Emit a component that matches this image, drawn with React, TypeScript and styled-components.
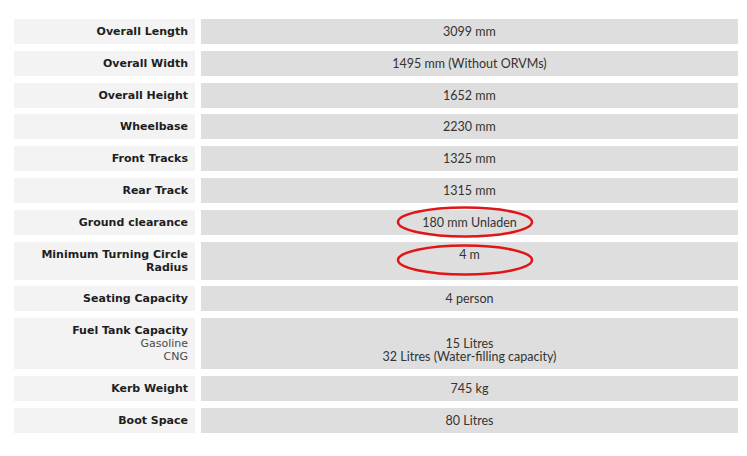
import React from 'react';
import styled, { createGlobalStyle } from 'styled-components';

const GlobalStyle = createGlobalStyle`
  html, body {
    margin: 0;
    padding: 0;
    background: #ffffff;
  }
`;

const Page = styled.div`
  width: 747px;
  height: 456px;
  padding: 19px 0 0 14px;
  box-sizing: border-box;
`;

const SpecGrid = styled.div`
  display: grid;
  grid-template-columns: 181px 537px;
  column-gap: 6px;
  row-gap: 6.8px;
`;

const LabelCell = styled.div`
  background: #f3f3f3;
  padding: 6px 7px 6px 6px;
  text-align: right;
  font-family: 'DejaVu Sans', Verdana, sans-serif;
  font-size: 11px;
  line-height: 13px;
  color: #1e1e1e;
`;

const LabelMain = styled.div`
  font-weight: bold;
`;

const LabelSub = styled.div`
  font-weight: normal;
  color: #4a4a4a;
`;

const ValueCell = styled.div`
  position: relative;
  background: #dedede;
  padding: 6px 8px;
  text-align: center;
  font-family: Lato, 'Open Sans', sans-serif;
  font-size: 12.5px;
  line-height: 13px;
  color: #333333;
`;

const Ring = styled.svg`
  position: absolute;
  left: 195px;
  top: ${(p: { $top: number }) => p.$top}px;
  overflow: visible;
  pointer-events: none;
`;

type Spec = {
  label: string;
  subs?: string[];
  values: string[];
  ring?: number;
};

const specs: Spec[] = [
  { label: 'Overall Length', values: ['3099 mm'] },
  { label: 'Overall Width', values: ['1495 mm (Without ORVMs)'] },
  { label: 'Overall Height', values: ['1652 mm'] },
  { label: 'Wheelbase', values: ['2230 mm'] },
  { label: 'Front Tracks', values: ['1325 mm'] },
  { label: 'Rear Track', values: ['1315 mm'] },
  { label: 'Ground clearance', values: ['180 mm Unladen'], ring: -4 },
  { label: 'Minimum Turning Circle Radius', values: ['4 m'], ring: 2 },
  { label: 'Seating Capacity', values: ['4 person'] },
  {
    label: 'Fuel Tank Capacity',
    subs: ['Gasoline', 'CNG'],
    values: ['\u00a0', '15 Litres', '32 Litres (Water-filling capacity)'],
  },
  { label: 'Kerb Weight', values: ['745 kg'] },
  { label: 'Boot Space', values: ['80 Litres'] },
];

export default function App() {
  return (
    <>
      <GlobalStyle />
      <Page>
        <SpecGrid>
          {specs.map((s) => (
            <React.Fragment key={s.label}>
              <LabelCell>
                <LabelMain>{s.label}</LabelMain>
                {s.subs?.map((sub) => (
                  <LabelSub key={sub}>{sub}</LabelSub>
                ))}
              </LabelCell>
              <ValueCell>
                {s.values.map((v, i) => (
                  <div key={i}>{v}</div>
                ))}
                {s.ring !== undefined && (
                  <Ring $top={s.ring} width="138" height="32" viewBox="0 0 138 32">
                    <ellipse
                      cx="69"
                      cy="16"
                      rx="67"
                      ry="14.5"
                      fill="none"
                      stroke="#e01515"
                      strokeWidth="2.5"
                    />
                  </Ring>
                )}
              </ValueCell>
            </React.Fragment>
          ))}
        </SpecGrid>
      </Page>
    </>
  );
}
